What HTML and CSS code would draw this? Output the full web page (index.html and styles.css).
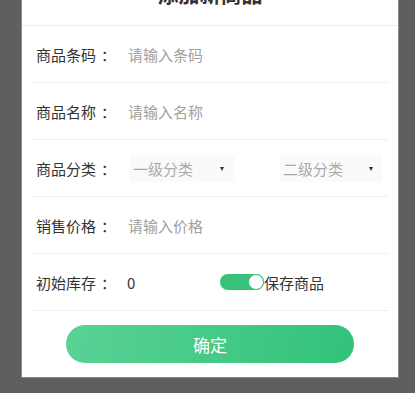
FILE: index.html
```html
<!DOCTYPE html>
<html lang="zh-CN">
<head>
    <meta charset="UTF-8">
    <meta name="viewport" content="width=device-width, initial-scale=1.0">
    <title>添加商品</title>
    <link rel="stylesheet" href="styles.css">
</head>
<body>

    <div class="modal">
        <div class="modal-header">添加新商品</div>
        <form id="goodsForm" class="goods-form">
            <div class="form-row">
                <label for="barcode">商品条码<span class="colon">：</span></label>
                <input type="text" id="barcode" name="barcode" placeholder="请输入条码">
            </div>

            <div class="form-row">
                <label for="name">商品名称<span class="colon">：</span></label>
                <input type="text" id="name" name="name" placeholder="请输入名称">
            </div>

            <div class="form-row">
                <label>商品分类<span class="colon">：</span></label>
                <div class="picker picker-first">
                    <span>一级分类</span>
                    <i class="arrow"></i>
                </div>
                <div class="picker picker-second">
                    <span>二级分类</span>
                    <i class="arrow"></i>
                </div>
            </div>

            <div class="form-row">
                <label for="price">销售价格<span class="colon">：</span></label>
                <input type="text" id="price" name="price" placeholder="请输入价格">
            </div>

            <div class="form-row">
                <label for="stock">初始库存<span class="colon">：</span></label>
                <input type="text" id="stock" name="stock" class="stock-input" value="0">
                <div class="switch-wrap">
                    <span class="switch"><span class="knob"></span></span>
                    <span class="switch-text">保存商品</span>
                </div>
            </div>

            <div class="btn-wrap">
                <button type="submit" class="submit-btn">确定</button>
            </div>
        </form>
    </div>

</body>
</html>
```

FILE: styles.css
```css
body {
    margin: 0;
    background-color: #5f5f5f;
    font-family: "Noto Sans CJK SC", "Noto Sans", sans-serif;
    color: #333;
    height: 393px;
    overflow: hidden;
}
.modal {
    width: 376px;
    margin: -22px 0 0 22px;
    background-color: white;
    box-shadow: 0 0 0 1px #8a8a8a;
}
.modal-header {
    line-height: 31px;
    padding-bottom: 16px;
    text-align: center;
    font-size: 21px;
    font-weight: bold;
    color: #333;
    border-bottom: 1px solid #ececec;
}
.goods-form {
    padding: 0 9px 14px;
}
.form-row {
    display: flex;
    align-items: center;
    height: 56px;
    padding-left: 5px;
    border-bottom: 1px solid #f0f0f0;
}
.form-row label {
    width: 92px;
    flex-shrink: 0;
    font-size: 15px;
    color: #333;
}
.colon {
    margin-left: 5px;
}
.form-row input {
    flex: 1;
    min-width: 0;
    border: none;
    outline: none;
    padding: 0;
    font-family: inherit;
    font-size: 15px;
    color: #333;
    background: transparent;
}
.form-row input::placeholder {
    color: #a0a0a0;
}
.picker {
    position: relative;
    display: flex;
    align-items: center;
    height: 27px;
    background-color: #fafafa;
    font-size: 15px;
    color: #aaa;
}
.picker-first {
    width: 105px;
    margin-left: 2px;
    padding-left: 3px;
    box-sizing: border-box;
}
.picker-second {
    width: 102px;
    margin-left: 45px;
    padding-left: 3px;
    box-sizing: border-box;
}
.arrow {
    position: absolute;
    top: 12px;
    width: 0;
    height: 0;
    border-left: 2.5px solid transparent;
    border-right: 2.5px solid transparent;
    border-top: 4px solid #333;
}
.picker-first .arrow {
    left: 90px;
}
.picker-second .arrow {
    left: 89px;
}
.form-row .stock-input {
    flex: none;
    width: 93px;
    margin-left: -1px;
}
.switch-wrap {
    display: flex;
    align-items: center;
}
.switch {
    position: relative;
    width: 44px;
    height: 16px;
    border-radius: 8px;
    background-color: #38c17a;
}
.knob {
    position: absolute;
    right: 0;
    top: 0;
    width: 14px;
    height: 14px;
    border-radius: 50%;
    background-color: white;
    border: 1px solid #38c17a;
}
.switch-text {
    font-size: 15px;
    color: #333;
}
.btn-wrap {
    display: flex;
    justify-content: center;
    padding-top: 14px;
}
.submit-btn {
    width: 288px;
    height: 38px;
    border: none;
    border-radius: 19px;
    background: linear-gradient(100deg, #5ad295, #32c27a);
    color: white;
    font-family: inherit;
    font-size: 17px;
    cursor: pointer;
}
```
